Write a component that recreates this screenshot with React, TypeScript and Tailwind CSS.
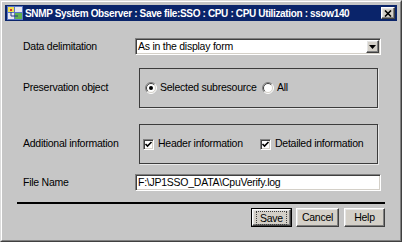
import React from 'react';

const sunken =
  'border border-t-[#808080] border-l-[#808080] border-b-white border-r-white shadow-[inset_1px_1px_0_#404040,inset_-1px_-1px_0_#d4d0c8] bg-white';

const raised =
  'border border-t-white border-l-white border-b-[#404040] border-r-[#404040] shadow-[inset_-1px_-1px_0_#808080,inset_1px_1px_0_#e4e4e4] bg-[#d4d0c8]';

const Radio: React.FC<{ checked?: boolean; label: string }> = ({ checked, label }) => (
  <div className="flex items-center gap-[3px] whitespace-nowrap">
    <svg width="12" height="12" viewBox="0 0 12 12" className="shrink-0">
      <circle cx="6" cy="6" r="5" fill="#fff" />
      <path d="M2.11 9.89 A5.5 5.5 0 0 1 9.89 2.11" stroke="#808080" fill="none" />
      <path d="M9.89 2.11 A5.5 5.5 0 0 1 2.11 9.89" stroke="#fff" fill="none" />
      <path d="M2.8 9.2 A4.5 4.5 0 0 1 9.2 2.8" stroke="#404040" fill="none" />
      <path d="M9.2 2.8 A4.5 4.5 0 0 1 2.8 9.2" stroke="#d4d0c8" fill="none" />
      {checked && <circle cx="6" cy="6" r="2" fill="#000" />}
    </svg>
    <span>{label}</span>
  </div>
);

const Check: React.FC<{ label: string }> = ({ label }) => (
  <div className="flex items-center gap-[4px] whitespace-nowrap">
    <div className={`w-[11px] h-[11px] shrink-0 ${sunken} flex items-center justify-center`}>
      <svg width="9" height="9" viewBox="0 0 9 9">
        <path d="M1.5 4 L3.5 6 L7.5 2" stroke="#000" strokeWidth="1.6" fill="none" />
      </svg>
    </div>
    <span>{label}</span>
  </div>
);

const Row: React.FC<{ label: string; className: string; children: React.ReactNode }> = ({
  label,
  className,
  children,
}) => (
  <div className={`flex items-center pl-[6px] pr-[4px] ${className}`}>
    <div className="w-[112px] whitespace-nowrap">{label}</div>
    <div className="flex-1 h-full">{children}</div>
  </div>
);

export default function App() {
  return (
    <div className="w-[404px] h-[244px] bg-white font-['Liberation_Sans',Arial,sans-serif] text-[10.5px] tracking-[-0.25px] text-black">
      <div className="w-[402px] h-[242px] border border-t-[#dcdcdc] border-l-[#dcdcdc] border-b-[#404040] border-r-[#404040]">
        <div className="w-full h-full border border-t-white border-l-white border-b-[#808080] border-r-[#808080] bg-[#c6c6c6] p-[3px] flex flex-col">
          {/* title bar */}
          <div className="h-[16px] bg-[#0a246a] flex items-center pl-[2px] pr-[2px]">
            <svg width="16" height="14" viewBox="0 0 16 14" className="shrink-0">
              <rect x="0" y="0" width="16" height="14" fill="#5a78c8" />
              <rect x="1" y="1" width="6" height="5" fill="#f0e050" />
              <rect x="8" y="1" width="7" height="5" fill="#e8e8f0" />
              <rect x="1" y="7" width="6" height="6" fill="#e8e8f0" />
              <rect x="8" y="7" width="7" height="6" fill="#60b050" />
              <rect x="3" y="3" width="2" height="2" fill="#d03030" />
              <path d="M4 6 L4 10 L11 10" stroke="#2a3a80" fill="none" />
            </svg>
            <span className="ml-[2px] text-white font-bold text-[10px] whitespace-nowrap tracking-[-0.35px]">
              SNMP System Observer : Save file:SSO : CPU : CPU Utilization : ssow140
            </span>
            <div className="flex-1" />
            <div className={`w-[14px] h-[12px] ${raised} flex items-center justify-center`}>
              <svg width="8" height="7" viewBox="0 0 8 7">
                <path d="M1 0.5 L7 6.5 M7 0.5 L1 6.5" stroke="#000" strokeWidth="1.6" />
              </svg>
            </div>
          </div>

          {/* body */}
          <div className="flex flex-col px-[12px]">
            <Row label="Data delimitation" className="mt-[17px] h-[17px]">
              <div className={`h-full ${sunken} flex items-center justify-between pl-[2px] pr-[1px]`}>
                <span>As in the display form</span>
                <div className={`w-[13px] h-[13px] ${raised} flex items-center justify-center`}>
                  <svg width="7" height="4" viewBox="0 0 7 4">
                    <path d="M0 0 H7 L3.5 4 Z" fill="#000" />
                  </svg>
                </div>
              </div>
            </Row>

            <Row label="Preservation object" className="mt-[13px] h-[40px]">
              <div className="h-full ml-[4px] mr-[3px] border border-[#3c3c3c] shadow-[1px_1px_0_#e8e8e8] flex items-center pl-[5px]">
                <div className="w-[117px]">
                  <Radio checked label="Selected subresource" />
                </div>
                <Radio label="All" />
              </div>
            </Row>

            <Row label="Additional information" className="mt-[16px] h-[40px]">
              <div className="h-full ml-[4px] mr-[3px] border border-[#3c3c3c] shadow-[1px_1px_0_#e8e8e8] flex items-center pl-[3px]">
                <div className="w-[117px]">
                  <Check label="Header information" />
                </div>
                <Check label="Detailed information" />
              </div>
            </Row>

            <Row label="File Name" className="mt-[10px] h-[17px]">
              <div className={`h-full ${sunken} flex items-center pl-[2px]`}>
                <span>F:\JP1SSO_DATA\CpuVerify.log</span>
              </div>
            </Row>

            <div className="mt-[11px] h-[2px] bg-black" />

            <div className="mt-[4px] flex justify-end gap-[4px]">
              <div className="w-[41px] h-[19px] border border-black p-0">
                <div className={`w-full h-full ${raised} flex items-center justify-center`}>
                  <span className="px-[3px] outline outline-1 outline-dotted outline-[#404040] leading-[12px]">
                    Save
                  </span>
                </div>
              </div>
              <div className={`w-[43px] h-[19px] ${raised} flex items-center justify-center`}>Cancel</div>
              <div className={`ml-[1px] w-[41px] h-[19px] ${raised} flex items-center justify-center`}>Help</div>
            </div>
          </div>
        </div>
      </div>
    </div>
  );
}
